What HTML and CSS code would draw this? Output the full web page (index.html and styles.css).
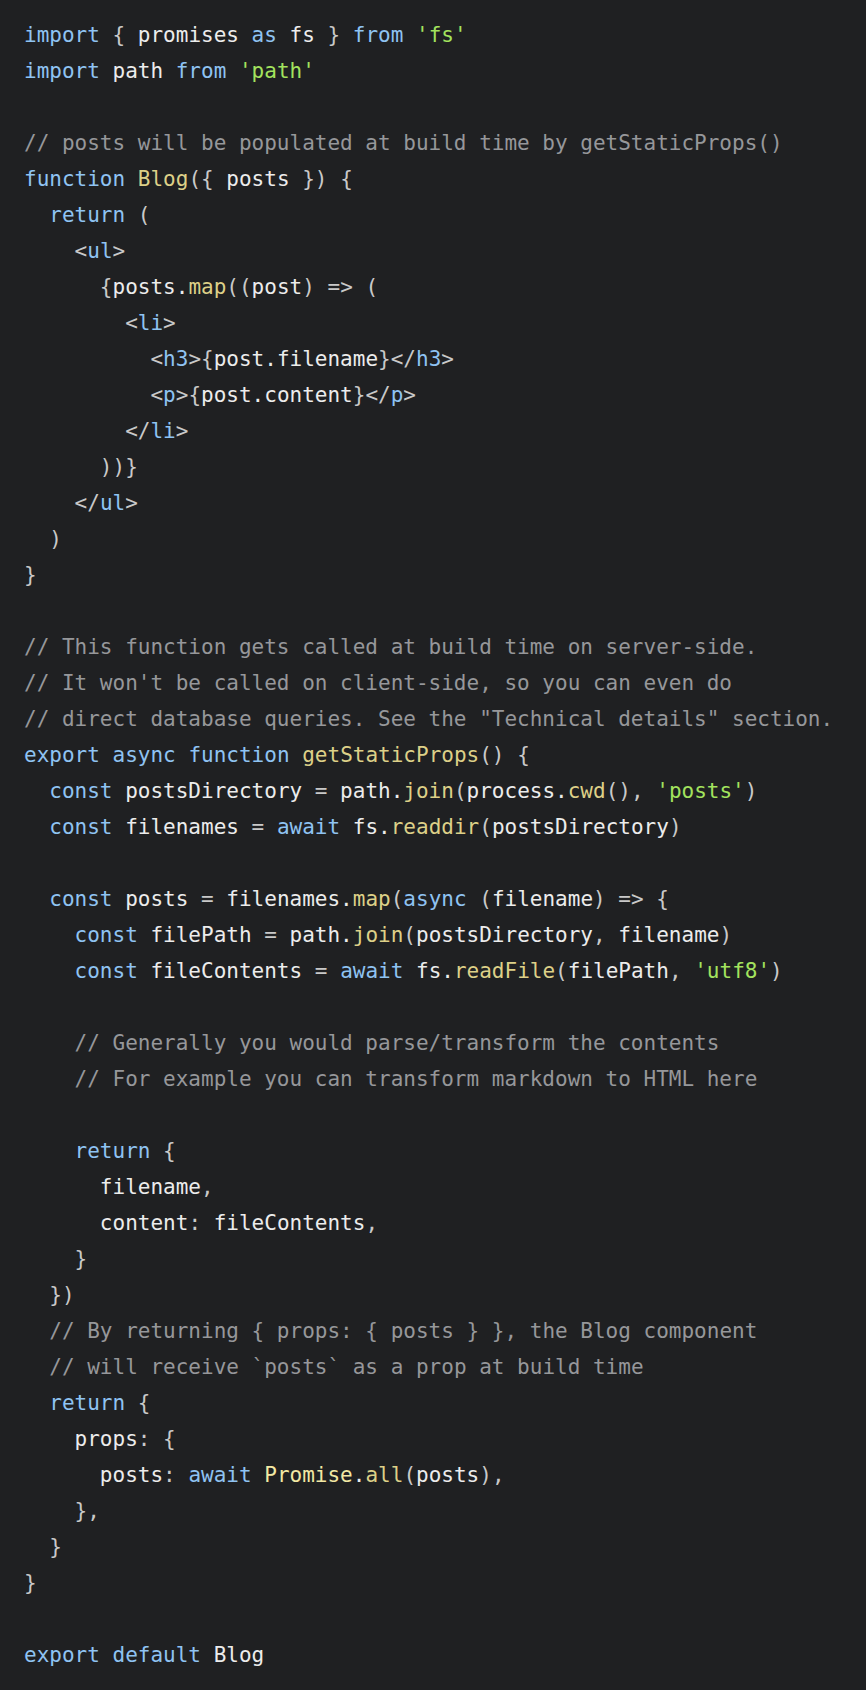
FILE: index.html
```html
<!DOCTYPE html>
<html lang="en">
<head>
<meta charset="utf-8">
<title>getStaticProps example</title>
<link rel="stylesheet" href="styles.css">
</head>
<body>
<pre class="code"><code><span class="k">import</span> <span class="p">{</span> promises <span class="k">as</span> fs <span class="p">}</span> <span class="k">from</span> <span class="s">'fs'</span>
<span class="k">import</span> path <span class="k">from</span> <span class="s">'path'</span>

<span class="c">// posts will be populated at build time by getStaticProps()</span>
<span class="k">function</span> <span class="f">Blog</span><span class="p">({</span> posts <span class="p">}) {</span>
  <span class="k">return</span> <span class="p">(</span>
    <span class="p">&lt;</span><span class="k">ul</span><span class="p">&gt;</span>
      <span class="p">{</span>posts.<span class="f">map</span><span class="p">((</span>post<span class="p">)</span> <span class="p">=&gt;</span> <span class="p">(</span>
        <span class="p">&lt;</span><span class="k">li</span><span class="p">&gt;</span>
          <span class="p">&lt;</span><span class="k">h3</span><span class="p">&gt;{</span>post.filename<span class="p">}&lt;/</span><span class="k">h3</span><span class="p">&gt;</span>
          <span class="p">&lt;</span><span class="k">p</span><span class="p">&gt;{</span>post.content<span class="p">}&lt;/</span><span class="k">p</span><span class="p">&gt;</span>
        <span class="p">&lt;/</span><span class="k">li</span><span class="p">&gt;</span>
      <span class="p">))}</span>
    <span class="p">&lt;/</span><span class="k">ul</span><span class="p">&gt;</span>
  <span class="p">)</span>
<span class="p">}</span>

<span class="c">// This function gets called at build time on server-side.</span>
<span class="c">// It won't be called on client-side, so you can even do</span>
<span class="c">// direct database queries. See the "Technical details" section.</span>
<span class="k">export</span> <span class="k">async</span> <span class="k">function</span> <span class="f">getStaticProps</span><span class="p">() {</span>
  <span class="k">const</span> postsDirectory <span class="p">=</span> path.<span class="f">join</span><span class="p">(</span>process.<span class="f">cwd</span><span class="p">(),</span> <span class="s">'posts'</span><span class="p">)</span>
  <span class="k">const</span> filenames <span class="p">=</span> <span class="k">await</span> fs.<span class="f">readdir</span><span class="p">(</span>postsDirectory<span class="p">)</span>

  <span class="k">const</span> posts <span class="p">=</span> filenames.<span class="f">map</span><span class="p">(</span><span class="k">async</span> <span class="p">(</span>filename<span class="p">)</span> <span class="p">=&gt; {</span>
    <span class="k">const</span> filePath <span class="p">=</span> path.<span class="f">join</span><span class="p">(</span>postsDirectory<span class="p">,</span> filename<span class="p">)</span>
    <span class="k">const</span> fileContents <span class="p">=</span> <span class="k">await</span> fs.<span class="f">readFile</span><span class="p">(</span>filePath<span class="p">,</span> <span class="s">'utf8'</span><span class="p">)</span>

    <span class="c">// Generally you would parse/transform the contents</span>
    <span class="c">// For example you can transform markdown to HTML here</span>

    <span class="k">return</span> <span class="p">{</span>
      filename<span class="p">,</span>
      content<span class="p">:</span> fileContents<span class="p">,</span>
    <span class="p">}</span>
  <span class="p">})</span>
  <span class="c">// By returning { props: { posts } }, the Blog component</span>
  <span class="c">// will receive `posts` as a prop at build time</span>
  <span class="k">return</span> <span class="p">{</span>
    props<span class="p">: {</span>
      posts<span class="p">:</span> <span class="k">await</span> <span class="t">Promise</span>.<span class="f">all</span><span class="p">(</span>posts<span class="p">),</span>
    <span class="p">},</span>
  <span class="p">}</span>
<span class="p">}</span>

<span class="k">export</span> <span class="k">default</span> Blog</code></pre>
</body>
</html>
```

FILE: styles.css
```css
html, body {
  margin: 0;
  padding: 0;
  background: #1f2022;
}

.code {
  margin: 0;
  padding: 17px 24px 17px 24px;
  background: #1f2022;
  color: #ececec;
  font-family: "DejaVu Sans Mono", "Liberation Mono", monospace;
  font-size: 21px;
  line-height: 36px;
  white-space: pre;
  min-height: 1656px;
}

.code code {
  font-family: inherit;
}

.k { color: #8fc3f2; }
.s { color: #a3e35e; }
.f { color: #ddd088; }
.t { color: #f2e8a4; }
.c { color: #96979a; }
.p { color: #c9c9c9; }
```
